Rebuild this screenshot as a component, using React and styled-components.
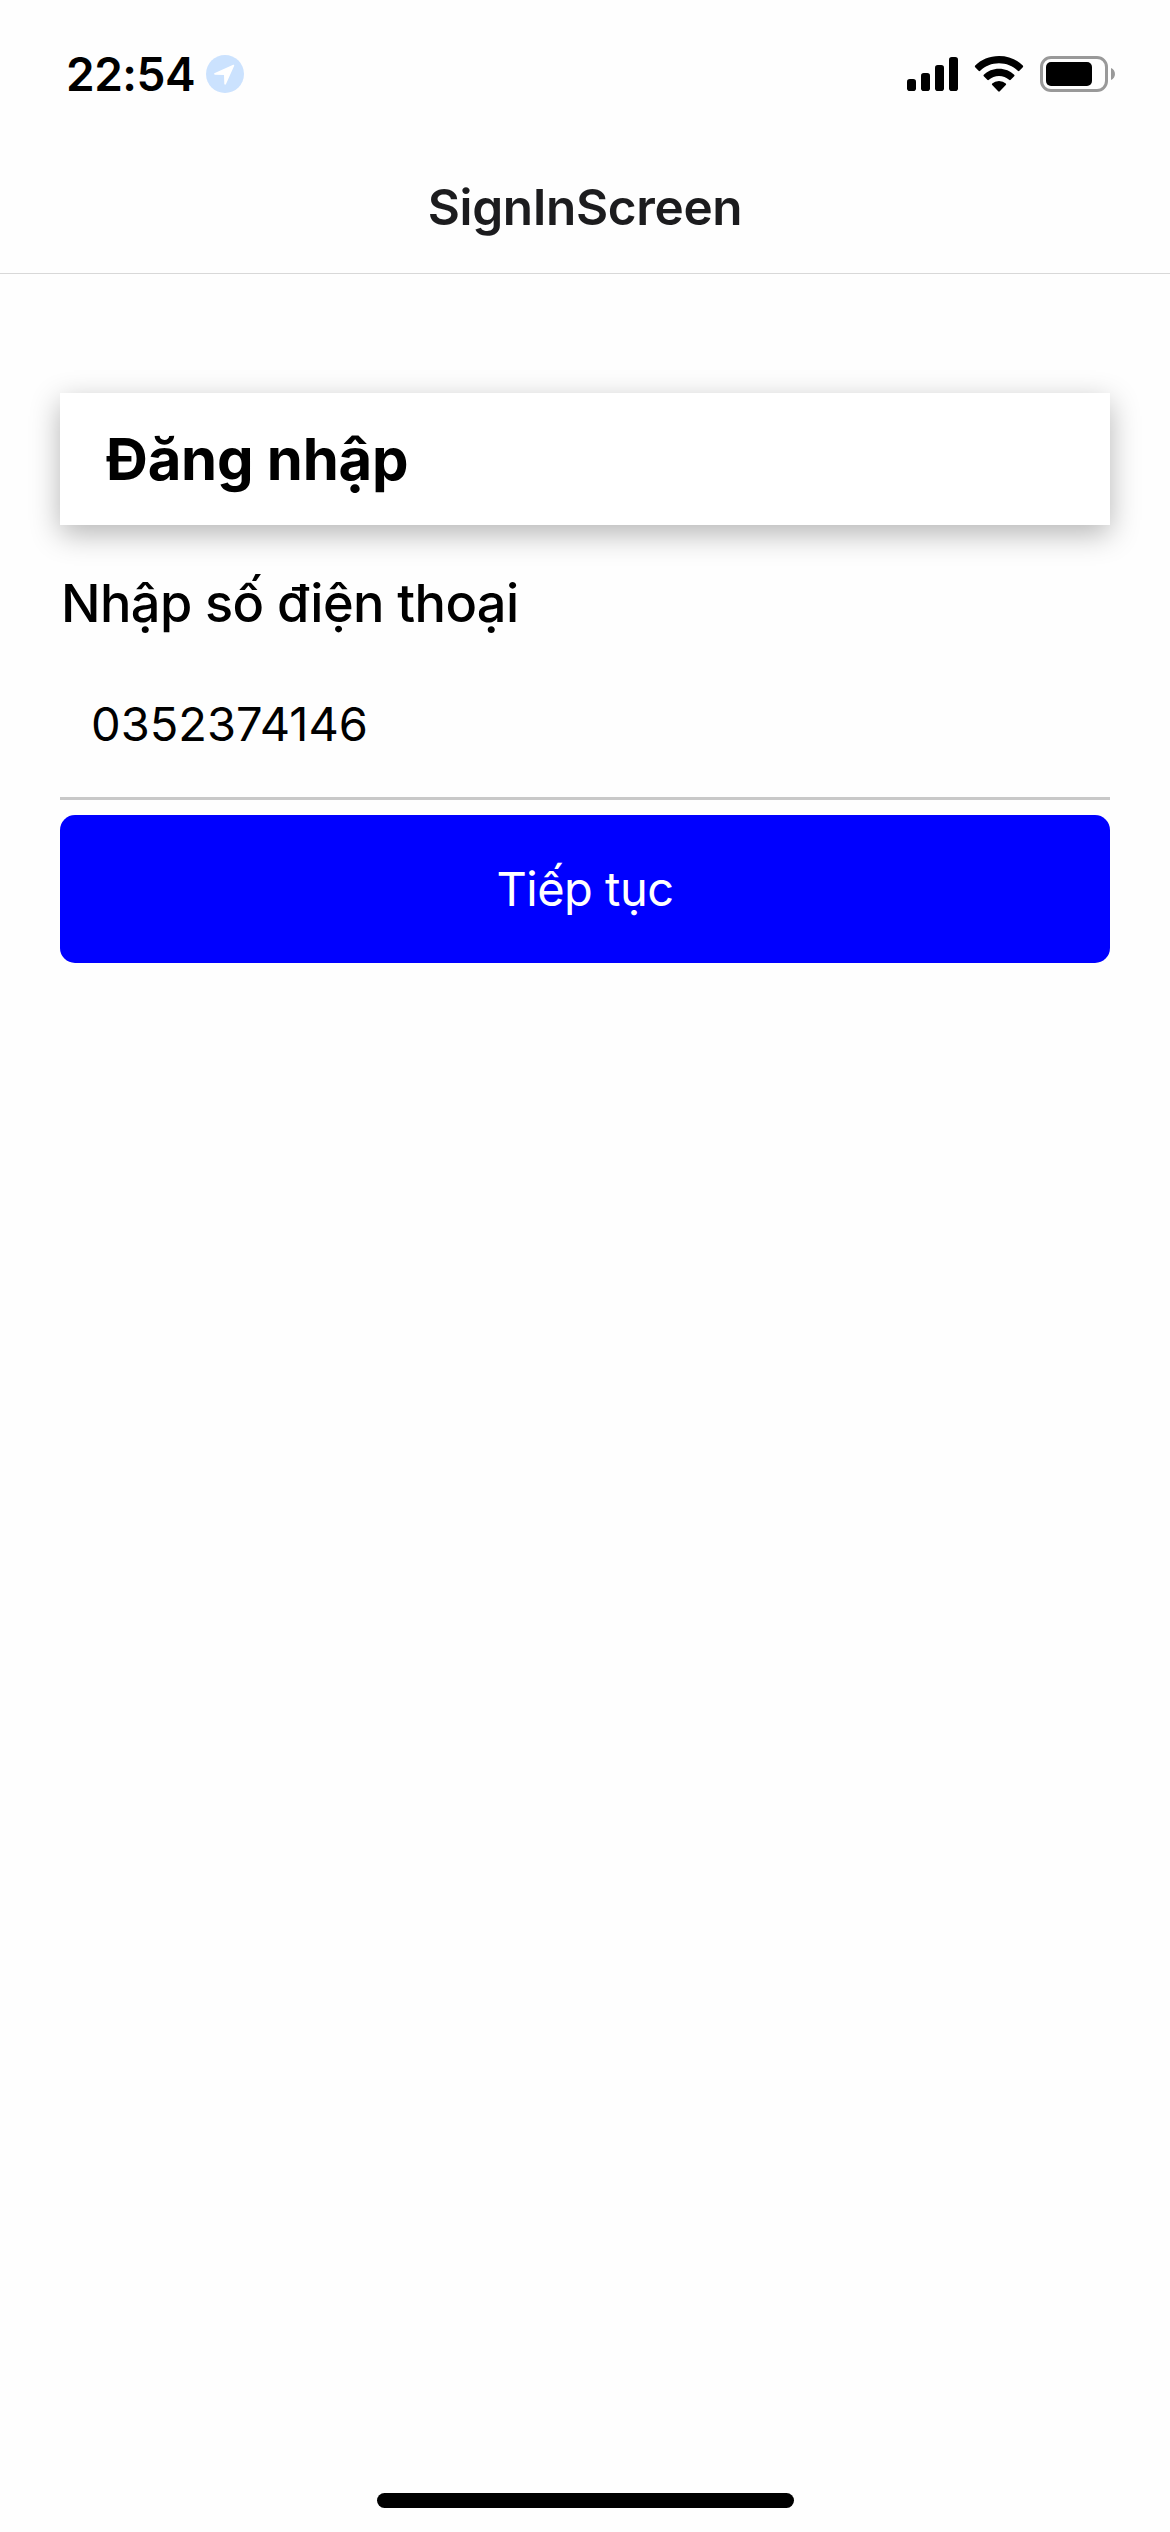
import React from "react";
import styled, { createGlobalStyle } from "styled-components";

const GlobalStyle = createGlobalStyle`
  *, *::before, *::after { box-sizing: border-box; }
  body {
    margin: 0;
    background: #fefefe;
    font-family: Inter, "Noto Sans", sans-serif;
  }
`;

const Screen = styled.div`
  display: flex;
  flex-direction: column;
  width: 1170px;
  height: 2532px;
  background: #fefefe;
  overflow: hidden;
`;

const StatusBar = styled.header`
  display: flex;
  justify-content: space-between;
  flex: none;
  height: 141px;
  padding: 46px 55px 0 66px;
`;

const StatusGroup = styled.div`
  display: flex;
  align-items: center;
  gap: ${(p) => p.$gap}px;
  height: 56px;
`;

const Clock = styled.span`
  font-size: 46px;
  font-weight: 600;
  line-height: 56px;
  letter-spacing: -0.5px;
  color: #000;
`;

const NavBar = styled.div`
  display: flex;
  align-items: center;
  justify-content: center;
  flex: none;
  height: 133px;
  border-bottom: 1px solid #d8d8d8;
`;

const NavTitle = styled.h1`
  margin: 0;
  font-size: 49.5px;
  font-weight: 600;
  line-height: 60px;
  letter-spacing: -0.35px;
  color: #1c1c1e;
`;

const Form = styled.main`
  display: flex;
  flex-direction: column;
  flex: 1;
  padding: 119px 60px 0;
`;

const TitleCard = styled.div`
  display: flex;
  align-items: center;
  height: 132px;
  padding: 0 46px;
  background: #fff;
  box-shadow: 0 9px 28px rgba(0, 0, 0, 0.29);
`;

const Title = styled.h2`
  margin: 0;
  font-size: 58px;
  font-weight: 700;
  line-height: 72px;
  letter-spacing: -0.25px;
  color: #000;
`;

const Label = styled.label`
  margin: 46px 0 15px;
  padding-left: 1px;
  font-size: 52.3px;
  font-weight: 500;
  line-height: 64px;
  letter-spacing: -0.6px;
  color: #000;
`;

const PhoneInput = styled.input`
  height: 150px;
  padding: 0 31px;
  border: 0;
  border-bottom: 3px solid #c8c8c8;
  border-radius: 0;
  outline: 0;
  background: transparent;
  font-family: inherit;
  font-size: 47px;
  font-weight: 400;
  color: #000;
`;

const SubmitButton = styled.button`
  height: 148px;
  margin-top: 15px;
  padding: 0 0 1px;
  border: 0;
  border-radius: 15px;
  background: #00f;
  font-family: inherit;
  font-size: 47px;
  font-weight: 400;
  letter-spacing: -0.5px;
  color: #fff;
`;

const HomeArea = styled.footer`
  display: flex;
  justify-content: center;
  flex: none;
  height: 39px;
`;

const HomeIndicator = styled.div`
  width: 417px;
  height: 15px;
  border-radius: 8px;
  background: #000;
`;

const LocationIcon = () => (
  <svg width="38" height="38" viewBox="0 0 38 38">
    <circle cx="19" cy="19" r="19" fill="#cbe2fe" />
    <path d="M27.2 9.8 L8.3 18.3 Q7.6 19.3 8.8 19.7 L18 20 L18.3 29 Q18.9 30.4 19.9 29.3 L28.2 10.8 Q28.4 9.5 27.2 9.8 Z" fill="#fff" />
  </svg>
);

const SignalIcon = () => (
  <svg width="51" height="36" viewBox="0 0 51 36">
    <rect x="0" y="23" width="9" height="12" rx="2.8" />
    <rect x="14" y="17" width="9" height="18" rx="2.8" />
    <rect x="28" y="9" width="9" height="26" rx="2.8" />
    <rect x="42" y="1" width="9" height="34" rx="2.8" />
  </svg>
);

const WifiIcon = () => (
  <svg width="50" height="36" viewBox="0 0 50 36">
    <path d="M25 0 C34.5 0 43 3.6 48.8 9.6 Q49.5 10.4 48.8 11.2 L45.4 14.8 Q44.6 15.5 43.8 14.8 C38.8 10 32.2 7.3 25 7.3 S11.2 10 6.2 14.8 Q5.4 15.5 4.6 14.8 L1.2 11.2 Q0.5 10.4 1.2 9.6 C7 3.6 15.5 0 25 0 Z" />
    <path d="M25 12.7 C31 12.7 36.3 15 40.2 18.7 Q41 19.5 40.2 20.3 L36.7 23.8 Q35.9 24.5 35.1 23.8 C32.3 21.3 28.9 19.9 25 19.9 S17.7 21.3 14.9 23.8 Q14.1 24.5 13.3 23.8 L9.8 20.3 Q9 19.5 9.8 18.7 C13.7 15 19 12.7 25 12.7 Z" />
    <path d="M25 25 Q29.2 25 31.8 27.5 Q32.6 28.3 31.8 29 L25.8 35.3 Q25 36 24.2 35.3 L18.2 29 Q17.4 28.3 18.2 27.5 Q20.8 25 25 25 Z" />
  </svg>
);

const BatteryIcon = () => (
  <svg width="75" height="36" viewBox="0 0 75 36">
    <rect x="1.5" y="1.5" width="65" height="33" rx="9.5" fill="none" stroke="#999" strokeWidth="3" />
    <rect x="6" y="6" width="46" height="24" rx="5" />
    <path d="M71 12 C76.3 14.2 76.3 21.8 71 24 Z" fill="#999" />
  </svg>
);

export default function App() {
  return (
    <>
      <GlobalStyle />
      <Screen>
        <StatusBar>
          <StatusGroup $gap={11}>
            <Clock>22:54</Clock>
            <LocationIcon />
          </StatusGroup>
          <StatusGroup $gap={16}>
            <SignalIcon />
            <WifiIcon />
            <BatteryIcon />
          </StatusGroup>
        </StatusBar>
        <NavBar>
          <NavTitle>SignInScreen</NavTitle>
        </NavBar>
        <Form>
          <TitleCard>
            <Title>Đăng nhập</Title>
          </TitleCard>
          <Label htmlFor="phone">Nhập số điện thoại</Label>
          <PhoneInput id="phone" type="tel" defaultValue="0352374146" />
          <SubmitButton type="button">Tiếp tục</SubmitButton>
        </Form>
        <HomeArea>
          <HomeIndicator />
        </HomeArea>
      </Screen>
    </>
  );
}
